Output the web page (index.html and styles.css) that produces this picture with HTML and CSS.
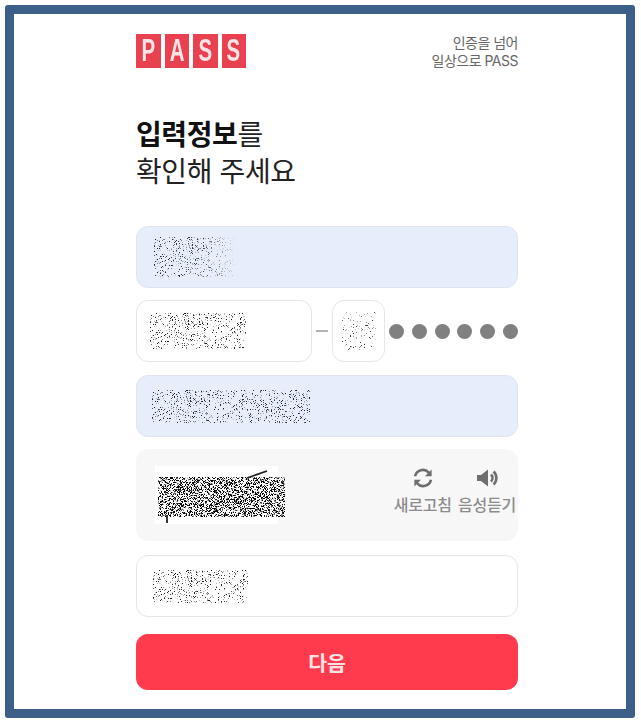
FILE: index.html
```html
<!DOCTYPE html>
<html lang="ko">
<head>
<meta charset="utf-8">
<title>PASS 입력정보 확인</title>
<link rel="stylesheet" href="styles.css">
</head>
<body>
<svg class="defs" aria-hidden="true">
  <defs>
    <linearGradient id="fade">
      <stop offset="0" stop-color="#000"/>
      <stop offset=".6" stop-color="#000" stop-opacity=".85"/>
      <stop offset="1" stop-color="#000" stop-opacity=".15"/>
    </linearGradient>
    <filter id="speck-mid" x="0" y="0" width="100%" height="100%" color-interpolation-filters="sRGB">
      <feTurbulence type="fractalNoise" baseFrequency="1.37 1.53" numOctaves="1" seed="4" result="n"/>
      <feColorMatrix in="n" type="matrix" values="0 0 0 0 .12  0 0 0 0 .12  0 0 0 0 .14  11 0 0 0 -6.6" result="d"/>
      <feComposite in="d" in2="SourceAlpha" operator="in"/>
    </filter>
    <filter id="speck-thin" x="0" y="0" width="100%" height="100%" color-interpolation-filters="sRGB">
      <feTurbulence type="fractalNoise" baseFrequency="1.37 1.53" numOctaves="1" seed="9" result="n"/>
      <feColorMatrix in="n" type="matrix" values="0 0 0 0 .2  0 0 0 0 .2  0 0 0 0 .22  11 0 0 0 -7.1" result="d"/>
      <feComposite in="d" in2="SourceAlpha" operator="in"/>
    </filter>
    <filter id="speck-dense" x="0" y="0" width="100%" height="100%" color-interpolation-filters="sRGB">
      <feTurbulence type="fractalNoise" baseFrequency="1.41 1.57" numOctaves="1" seed="12" result="n"/>
      <feColorMatrix in="n" type="matrix" values="0 0 0 0 0  0 0 0 0 0  0 0 0 0 0  14 0 0 0 -7" result="d"/>
      <feComposite in="d" in2="SourceAlpha" operator="in"/>
    </filter>
  </defs>
</svg>

<main class="frame">
  <div class="content">
    <header class="top">
      <div class="logo">
        <span class="tile"><b>P</b></span><span class="tile"><b>A</b></span><span class="tile"><b>S</b></span><span class="tile"><b>S</b></span>
      </div>
      <p class="slogan">인증을 넘어<br>일상으로 PASS</p>
    </header>

    <h1 class="title"><strong>입력정보</strong>를<br>확인해 주세요</h1>

    <div class="form">
      <div class="field filled">
        <svg class="mask m-name" width="80" height="40"><rect width="80" height="40" fill="url(#fade)" filter="url(#speck-mid)"/></svg>
      </div>

      <div class="id-row">
        <div class="field id-front">
          <svg class="mask m-front" width="96" height="36"><rect width="96" height="36" filter="url(#speck-mid)"/></svg>
        </div>
        <span class="dash"></span>
        <div class="field id-back">
          <svg class="mask" width="34" height="38"><rect width="34" height="38" filter="url(#speck-thin)"/></svg>
        </div>
        <div class="dots">
          <i></i><i></i><i></i><i></i><i></i><i></i>
        </div>
      </div>

      <div class="field filled">
        <svg class="mask m-phone" width="158" height="33"><rect width="158" height="33" filter="url(#speck-mid)"/></svg>
      </div>

      <div class="captcha">
        <div class="captcha-img">
          <svg width="130" height="60" class="captcha-art">
            <rect x="3" y="11" width="127" height="40" filter="url(#speck-dense)"/>
            <path class="captcha-line" d="M92 12 L112 5 M12 57 L12 49"/>
          </svg>
        </div>
        <div class="captcha-tools">
          <div class="tool">
            <svg class="tool-icon" width="24" height="24" viewBox="0 0 24 24">
              <path d="M4 10.2A8 8 0 0 1 17.8 6.6L19.4 8.4" class="ico-line"/>
              <path d="M20.6 3.6 L20.6 10.2 L14 10.2 Z" class="ico-fill"/>
              <path d="M20 13.8A8 8 0 0 1 6.2 17.4L4.6 15.6" class="ico-line"/>
              <path d="M3.4 20.4 L3.4 13.8 L10 13.8 Z" class="ico-fill"/>
            </svg>
            <span>새로고침</span>
          </div>
          <div class="tool">
            <svg class="tool-icon" width="24" height="24" viewBox="0 0 24 24">
              <path d="M2 9 H6 L13 3.5 V20.5 L6 15 H2 Z" class="ico-fill"/>
              <path d="M16 8.5 A5 5 0 0 1 16 15.5" class="ico-line"/>
              <path d="M18.6 5.5 A9 9 0 0 1 18.6 18.5" class="ico-line"/>
            </svg>
            <span>음성듣기</span>
          </div>
        </div>
      </div>

      <div class="field">
        <svg class="mask m-code" width="95" height="33"><rect width="95" height="33" filter="url(#speck-mid)"/></svg>
      </div>

      <button class="next" type="button">다음</button>
    </div>
  </div>
</main>
</body>
</html>
```

FILE: styles.css
```css
* { box-sizing: border-box; }

html, body { margin: 0; height: 100%; background: #fff; }

body {
  padding: 5px 6px 5px 5px;
  font-family: "Noto Sans CJK KR", "Inter", "Liberation Sans", sans-serif;
  color: #222;
}

.defs { position: absolute; width: 0; height: 0; }

.frame {
  width: 630px;
  height: 713px;
  border: 9px solid #3c5f8a;
  border-radius: 3px;
  background: #fff;
  padding: 0 108px 0 122px;
}

.content { display: flex; flex-direction: column; }

.top {
  display: flex;
  justify-content: space-between;
  align-items: flex-start;
  padding-top: 20px;
}

.logo { display: flex; gap: 4px; width: 110px; }

.tile {
  flex: 1;
  height: 34px;
  background: #ea4151;
  color: #fbe4e6;
  font-family: "Liberation Sans", sans-serif;
  font-size: 31px;
  line-height: 34px;
  text-align: center;
}

.tile b {
  display: inline-block;
  font-weight: 700;
  transform: scaleX(.66);
}

.slogan {
  margin: 0;
  font-family: "Inter", "Noto Sans CJK KR", sans-serif;
  font-size: 14px;
  line-height: 18px;
  letter-spacing: -.5px;
  text-align: right;
  color: #666;
}

.title {
  margin: 45px 0 0;
  font-size: 28px;
  font-weight: 400;
  line-height: 37px;
  letter-spacing: -.4px;
  color: #222;
}

.title strong { font-weight: 700; color: #111; }

.form {
  display: flex;
  flex-direction: column;
  margin-top: 37px;
}

.field {
  display: flex;
  align-items: center;
  height: 62px;
  padding-left: 16px;
  background: #fff;
  border: 1px solid #e6e6e8;
  border-radius: 12px;
  overflow: hidden;
}

.field.filled { background: #e6eefb; border-color: #dfe4ee; }

.mask { display: block; flex: none; }
.m-name { margin-left: 1px; }
.m-front { margin-left: -3px; }
.m-phone { margin-left: -1px; }
.m-code { margin-left: 0; }

.id-row {
  display: flex;
  align-items: center;
  margin: 12px 0 13px;
}

.id-front { width: 176px; }

.dash {
  width: 12px;
  height: 2px;
  margin: 0 4px;
  background: #b4b4b4;
}

.id-back { width: 53px; padding-left: 9px; }

.dots {
  display: flex;
  justify-content: space-between;
  flex: 1;
  margin-left: 4px;
}

.dots i {
  width: 15px;
  height: 15px;
  border-radius: 50%;
  background: #808080;
}

.captcha {
  display: flex;
  justify-content: space-between;
  height: 92px;
  margin-top: 12px;
  padding: 17px 2px 0 19px;
  background: #f7f7f7;
  border-radius: 12px;
}

.captcha-img {
  width: 123px;
  height: 58px;
  background: #fff;
}

.captcha-art { display: block; overflow: visible; }

.captcha-line { fill: none; stroke: #222; stroke-width: 1.8; }

.captcha-tools { display: flex; gap: 6px; }

.tool {
  display: flex;
  flex-direction: column;
  align-items: center;
  font-size: 16px;
  line-height: 20px;
  letter-spacing: -.2px;
  color: #8c8c8c;
  font-weight: 500;
}

.tool-icon { display: block; margin: 0 0 4px; }

.ico-line { fill: none; stroke: #6e6e6e; stroke-width: 2.6; }
.ico-fill { fill: #6e6e6e; }

.captcha + .field { margin-top: 14px; }

.next {
  height: 56px;
  margin-top: 17px;
  border: 0;
  border-radius: 12px;
  background: #ff3b4d;
  color: #fde3e5;
  font-family: inherit;
  font-size: 20.5px;
  font-weight: 700;
}
```
